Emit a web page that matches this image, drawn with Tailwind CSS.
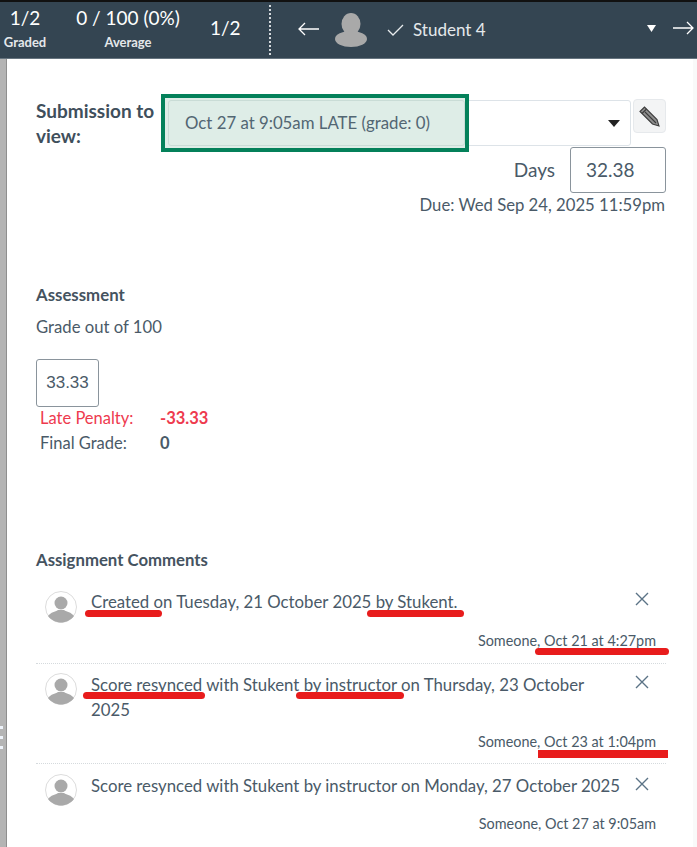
<!DOCTYPE html>
<html lang="en">
<head>
    <meta charset="UTF-8">
    <title>SpeedGrader</title>
    <script src="https://cdn.jsdelivr.net/npm/@tailwindcss/browser@4"></script>
</head>
<body class="relative w-[697px] h-[847px] overflow-hidden bg-white text-[#4a5a68] font-['Lato',sans-serif]">

    <!-- top bar -->
    <header class="h-[59px] bg-[#344552] border-t-[2px] border-b border-t-[#111] border-b-[#66747f] flex text-white">
        <div class="w-[50px] pt-[5px] text-center">
            <div class="text-[19px] leading-[22px]">1/2</div>
            <div class="mt-[5px] text-[13px] leading-[16px] font-bold text-[#e4e8eb]">Graded</div>
        </div>
        <div class="w-[156px] pt-[5px] text-center">
            <div class="text-[19px] leading-[22px]">0 / 100 (0%)</div>
            <div class="mt-[5px] text-[13px] leading-[16px] font-bold text-[#e4e8eb]">Average</div>
        </div>
        <div class="w-[63px] pt-[15px] pl-[4px] text-[19px] leading-[22px]">1/2</div>
        <div class="relative flex-1 flex items-center border-l-2 border-dotted border-[#d5dadd] mt-[3px] mb-[3px]">
            <svg class="ml-[27px] mb-[3px]" width="22" height="14" viewBox="0 0 22 14" fill="none" stroke="#fff" stroke-width="1.3"><path d="M1 7h20M7 1 1 7l6 6"/></svg>
            <svg class="ml-[15px]" width="32" height="34" viewBox="0 0 32 34" fill="#a9a9a9"><ellipse cx="16" cy="11" rx="9.500" ry="11"/><ellipse cx="16" cy="26" rx="16" ry="8"/></svg>
            <svg class="ml-[20px]" width="17" height="14" viewBox="0 0 17 14" fill="none" stroke="#e8ecee" stroke-width="1.3"><path d="M1 7l5 5L16 2"/></svg>
            <span class="ml-[9px] text-[17px] text-[#e4e8eb]">Student 4</span>
            <svg class="absolute left-[376px] top-[20px]" width="9" height="7" viewBox="0 0 9 7" fill="#fff"><path d="M0 0h9L4.500 7z"/></svg>
            <svg class="absolute left-[402px] top-[16px]" width="21" height="14" viewBox="0 0 21 14" fill="none" stroke="#fff" stroke-width="1.3"><path d="M0 7h20M14 1l6 6-6 6"/></svg>
        </div>
    </header>

    <div class="flex h-[788px]">
        <!-- resize handle -->
        <div class="w-[7px] shrink-0 bg-[#b4b4b4] border-r border-[#8f8f8f] pt-[667px] flex flex-col gap-[7px]">
            <div class="w-[3px] h-[3px] bg-[#eef3fa]"></div>
            <div class="w-[3px] h-[3px] bg-[#eef3fa]"></div>
            <div class="w-[3px] h-[3px] bg-[#eef3fa]"></div>
        </div>

        <main class="w-[686px] shrink-0 pl-[29px] pr-[27px] text-[16.800px]">
            <!-- submission picker -->
            <div class="flex h-[88px] pt-[39px]">
                <div class="w-[132px] text-[19px] leading-[25px] font-bold text-[#3f4f5c]">Submission to view:</div>
                <div class="relative h-[46px] w-[463px] mt-[2px] pl-[16px] flex items-center bg-white border border-[#dde3e8] rounded-[3px]">
                    <div class="absolute -left-[8px] -top-[7px] w-[308px] h-[58px] bg-[#deede7] border-[4px] border-[#04815a]"></div>
                    <div class="absolute -left-[1px] -top-[1px] w-[297px] h-[46px] border border-[#c9dcd6] rounded-[3px]"></div>
                    <span class="relative text-[#526673]">Oct 27 at 9:05am LATE (grade: 0)</span>
                    <svg class="absolute right-[10px] top-[19px]" width="12" height="7" viewBox="0 0 12 7" fill="#222"><path d="M0 0h12L6 7z"/></svg>
                </div>
                <div class="ml-[2px] mt-[1px] w-[33px] h-[34px] flex items-center justify-center bg-[#f3f4f5] border border-[#e6e9ec] rounded-[4px]">
                    <svg width="21" height="21" viewBox="0 0 21 21" fill="#8f8f8f" stroke="#3c3c3c" stroke-width="1.100"><path d="M1 5.500 5.500 1 18 13.500l2 6.500-6.500-2z"/><path d="M3 7.500 7.500 3M6 6l11 11" fill="none"/></svg>
                </div>
            </div>

            <!-- days late -->
            <div class="flex justify-end items-center">
                <span class="text-[19px] mr-[15px]">Days</span>
                <div class="w-[96px] h-[46px] pl-[15px] flex items-center border border-[#8a949c] rounded-[3px] text-[19px]">32.38</div>
            </div>
            <p class="text-right text-[16.700px] leading-[20px] mt-[2px] pr-[1px]">Due: Wed Sep 24, 2025 11:59pm</p>

            <!-- assessment -->
            <h3 class="mt-[70px] text-[16.800px] leading-[20px] font-bold text-[#45535f]">Assessment</h3>
            <p class="mt-[12px] text-[16.700px] leading-[20px]">Grade out of 100</p>
            <div class="mt-[22px] w-[63px] h-[48px] flex items-center justify-center border border-[#8a949c] rounded-[3px] text-[17px] font-['Liberation_Sans',sans-serif]">33.33</div>
            <div class="ml-[4px] -mt-[1px] flex text-[16.500px] leading-[25px] text-[#ee3a4e]">
                <span class="w-[120px]">Late Penalty:</span><span class="font-bold">-33.33</span>
            </div>
            <div class="ml-[4px] flex text-[16.500px] leading-[25px]">
                <span class="w-[120px]">Final Grade:</span><span class="font-bold">0</span>
            </div>

            <!-- comments -->
            <h3 class="mt-[94px] text-[16.750px] leading-[20px] font-bold text-[#45535f]">Assignment Comments</h3>

            <div class="h-[94px] pt-[19px] border-b border-dotted border-[#d5dadd]">
                <div class="flex items-start pl-[9px]">
                    <svg class="mt-[2px] shrink-0" width="32" height="32" viewBox="0 0 32 32"><circle cx="16" cy="16" r="15.500" fill="#fff" stroke="#dcdcdc"/><circle cx="16" cy="12" r="6.500" fill="#a9a9a9"/><path d="M3 25c3-4 7-4 10-6h6c3 2 7 2 10 6-3 4-8 6.500-13 6.500S6 29 3 25z" fill="#a9a9a9"/></svg>
                    <p class="ml-[14px] w-[535px] leading-[25px]">Created on Tuesday, 21 October 2025 by Stukent.</p>
                    <svg class="ml-[9px] mt-[3px] shrink-0" width="14" height="14" viewBox="0 0 14 14" fill="none" stroke="#5b7386" stroke-width="1.400"><path d="M1 1l12 12M13 1 1 13"/></svg>
                </div>
                <p class="mt-[8px] pr-[10px] text-right text-[14.400px] leading-[20px]">Someone, Oct 21 at 4:27pm</p>
            </div>

            <div class="h-[100px] pt-[8px] border-b border-dotted border-[#d5dadd]">
                <div class="flex items-start pl-[9px]">
                    <svg class="mt-[1px] shrink-0" width="32" height="32" viewBox="0 0 32 32"><circle cx="16" cy="16" r="15.500" fill="#fff" stroke="#dcdcdc"/><circle cx="16" cy="12" r="6.500" fill="#a9a9a9"/><path d="M3 25c3-4 7-4 10-6h6c3 2 7 2 10 6-3 4-8 6.500-13 6.500S6 29 3 25z" fill="#a9a9a9"/></svg>
                    <p class="ml-[14px] w-[535px] leading-[25px]">Score resynced with Stukent by instructor on Thursday, 23 October 2025</p>
                    <svg class="ml-[9px] mt-[3px] shrink-0" width="14" height="14" viewBox="0 0 14 14" fill="none" stroke="#5b7386" stroke-width="1.400"><path d="M1 1l12 12M13 1 1 13"/></svg>
                </div>
                <p class="mt-[10px] pr-[10px] text-right text-[14.400px] leading-[20px]">Someone, Oct 23 at 1:04pm</p>
            </div>

            <div class="pt-[9px]">
                <div class="flex items-start pl-[9px]">
                    <svg class="mt-[1px] shrink-0" width="32" height="32" viewBox="0 0 32 32"><circle cx="16" cy="16" r="15.500" fill="#fff" stroke="#dcdcdc"/><circle cx="16" cy="12" r="6.500" fill="#a9a9a9"/><path d="M3 25c3-4 7-4 10-6h6c3 2 7 2 10 6-3 4-8 6.500-13 6.500S6 29 3 25z" fill="#a9a9a9"/></svg>
                    <p class="ml-[14px] w-[535px] leading-[25px]">Score resynced with Stukent by instructor on Monday, 27 October 2025</p>
                    <svg class="ml-[9px] mt-[4px] shrink-0" width="14" height="14" viewBox="0 0 14 14" fill="none" stroke="#5b7386" stroke-width="1.400"><path d="M1 1l12 12M13 1 1 13"/></svg>
                </div>
                <p class="mt-[8px] pr-[10px] text-right text-[14.400px] leading-[20px]">Someone, Oct 27 at 9:05am</p>
            </div>
        </main>

        <div class="flex-1 bg-[#f9f9f9]"></div>
    </div>

    <!-- red marker annotations drawn over the screenshot -->
    <div class="absolute left-[85px] top-[610px] w-[77px] h-[7px] rounded-full bg-[#e81c1c]"></div>
    <div class="absolute left-[367px] top-[610px] w-[97px] h-[7px] rounded-full bg-[#e81c1c]"></div>
    <div class="absolute left-[535px] top-[648px] w-[134px] h-[7px] rounded-full bg-[#e81c1c]"></div>
    <div class="absolute left-[83px] top-[692px] w-[122px] h-[7px] rounded-full bg-[#e81c1c]"></div>
    <div class="absolute left-[296px] top-[692px] w-[108px] h-[7px] rounded-full bg-[#e81c1c]"></div>
    <div class="absolute left-[538px] top-[750px] w-[130px] h-[8px] bg-[#e81c1c]"></div>
</body>
</html>
